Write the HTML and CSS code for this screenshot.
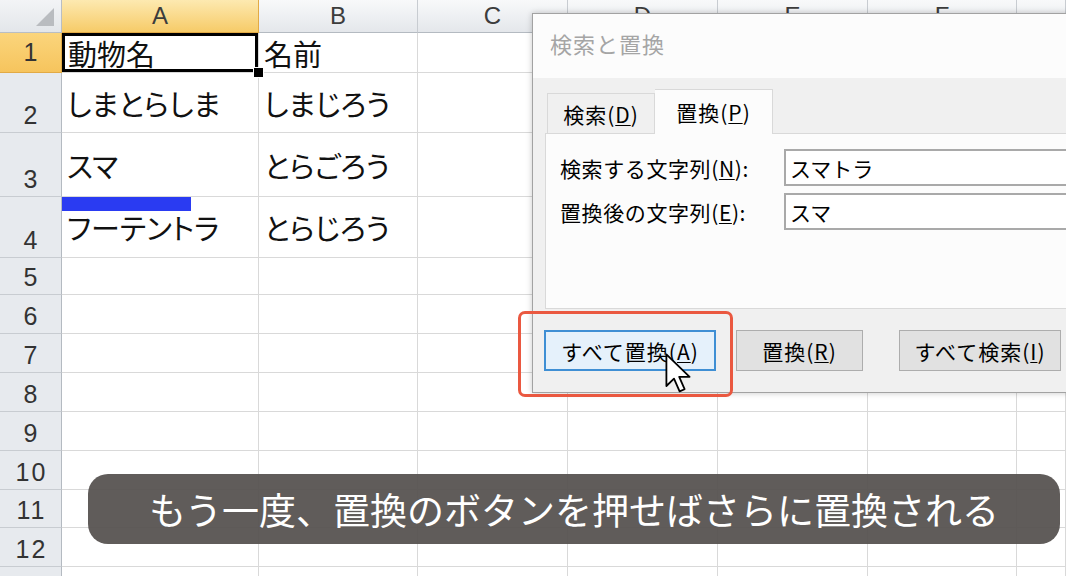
FILE: index.html
```html
<!DOCTYPE html>
<html lang="ja">
<head>
<meta charset="utf-8">
<title>検索と置換</title>
<link rel="stylesheet" href="styles.css">
</head>
<body>
<div class="screen">
  <div class="sheet">
    <div class="corner"><span class="tri"></span></div>
    <div class="ch sel">A</div><div class="ch">B</div><div class="ch">C</div><div class="ch">D</div><div class="ch">E</div><div class="ch">F</div><div class="ch"></div>

    <div class="rh sel r1">1</div>
    <div class="c active">動物名<span class="handle"></span></div><div class="c">名前</div><div class="c"></div><div class="c"></div><div class="c"></div><div class="c"></div><div class="c"></div>

    <div class="rh">2</div>
    <div class="c">しまとらしま</div><div class="c">しまじろう</div><div class="c"></div><div class="c"></div><div class="c"></div><div class="c"></div><div class="c"></div>

    <div class="rh">3</div>
    <div class="c">スマ</div><div class="c">とらごろう</div><div class="c"></div><div class="c"></div><div class="c"></div><div class="c"></div><div class="c"></div>

    <div class="rh">4</div>
    <div class="c"><span class="mark"></span>フーテントラ</div><div class="c">とらじろう</div><div class="c"></div><div class="c"></div><div class="c"></div><div class="c"></div><div class="c"></div>

    <div class="rh">5</div><div class="c"></div><div class="c"></div><div class="c"></div><div class="c"></div><div class="c"></div><div class="c"></div><div class="c"></div>
    <div class="rh">6</div><div class="c"></div><div class="c"></div><div class="c"></div><div class="c"></div><div class="c"></div><div class="c"></div><div class="c"></div>
    <div class="rh">7</div><div class="c"></div><div class="c"></div><div class="c"></div><div class="c"></div><div class="c"></div><div class="c"></div><div class="c"></div>
    <div class="rh">8</div><div class="c"></div><div class="c"></div><div class="c"></div><div class="c"></div><div class="c"></div><div class="c"></div><div class="c"></div>
    <div class="rh">9</div><div class="c"></div><div class="c"></div><div class="c"></div><div class="c"></div><div class="c"></div><div class="c"></div><div class="c"></div>
    <div class="rh">10</div><div class="c"></div><div class="c"></div><div class="c"></div><div class="c"></div><div class="c"></div><div class="c"></div><div class="c"></div>
    <div class="rh">11</div><div class="c"></div><div class="c"></div><div class="c"></div><div class="c"></div><div class="c"></div><div class="c"></div><div class="c"></div>
    <div class="rh">12</div><div class="c"></div><div class="c"></div><div class="c"></div><div class="c"></div><div class="c"></div><div class="c"></div><div class="c"></div>
    <div class="rh">13</div><div class="c"></div><div class="c"></div><div class="c"></div><div class="c"></div><div class="c"></div><div class="c"></div><div class="c"></div>
  </div>

  <div class="dialog">
    <div class="dlg-title">検索と置換</div>
    <div class="dlg-body">
      <div class="tabs">
        <div class="tab">検索(<u>D</u>)</div>
        <div class="tab active">置換(<u>P</u>)</div>
      </div>
      <div class="panel">
        <div class="field"><span class="label">検索する文字列(<u>N</u>):</span><span class="input">スマトラ</span></div>
        <div class="field"><span class="label">置換後の文字列(<u>E</u>):</span><span class="input">スマ</span></div>
      </div>
      <div class="buttons">
        <div class="btn primary">すべて置換(<u>A</u>)</div>
        <div class="btn b2">置換(<u>R</u>)</div>
        <div class="btn b3">すべて検索(<u>I</u>)</div>
      </div>
    </div>
  </div>

  <div class="highlight"></div>

  <svg class="cursor" viewBox="0 0 13 20" width="26" height="40">
    <path d="M0.7 0.7 L0.7 16.5 L4.5 12.8 L7.3 19.2 L9.8 18.1 L7.1 11.9 L12.3 11.9 Z" fill="#fff" stroke="#000" stroke-width="0.9" stroke-linejoin="round"/>
  </svg>

  <div class="caption">もう一度、置換のボタンを押せばさらに置換される</div>
</div>
</body>
</html>
```

FILE: styles.css
```css
* { box-sizing: border-box; margin: 0; padding: 0; }

body {
  margin: 0;
  background: #fff;
  font-family: "Noto Sans CJK JP", "Noto Sans", sans-serif;
  overflow: hidden;
}

.screen {
  position: relative;
  width: 1066px;
  height: 576px;
  overflow: hidden;
  background: #fff;
}

/* ---------- spreadsheet ---------- */
.sheet {
  display: grid;
  grid-template-columns: 62px 197px 159px 150px 150px 150px 149px 49px;
  grid-template-rows: 33px 40px 60px 64px 61px 37px 39px 39px 39px 39px 39px 38px 39px 39px;
}

.corner {
  background: linear-gradient(#f3f4f6, #e3e6ea);
  border-right: 1px solid #b9bec4;
  border-bottom: 1px solid #b9bec4;
  display: flex;
  align-items: flex-end;
  justify-content: flex-end;
  padding: 0 7px 6px 0;
}

.tri {
  width: 18px;
  height: 18px;
  background: #b9bcc0;
  clip-path: polygon(100% 0, 100% 100%, 0 100%);
}

.ch {
  background: linear-gradient(#f8f9fa, #e4e7eb);
  border-right: 1px solid #c8ccd1;
  border-bottom: 1px solid #b4bac1;
  display: flex;
  align-items: center;
  justify-content: center;
  font-family: "Liberation Sans", sans-serif;
  font-size: 24px;
  color: #3c3c3c;
}

.ch.sel {
  background: linear-gradient(#fde9b0, #f6cb68);
  border-right-color: #e2aa45;
  border-bottom-color: #e2aa45;
}

.rh {
  background: #e7eaee;
  border-right: 1px solid #b4bac1;
  border-bottom: 1px solid #c8ccd1;
  display: flex;
  align-items: flex-end;
  justify-content: center;
  padding: 0 0 4px 2px;
  font-family: "Liberation Sans", sans-serif;
  font-size: 25px;
  line-height: 1;
  letter-spacing: 2px;
  color: #333;
}

.rh.sel {
  background: linear-gradient(#fbd57c, #f6c45d);
  border-right-color: #e2aa45;
  border-bottom-color: #e2aa45;
}

.rh.r1 { padding-bottom: 7px; }

.c {
  position: relative;
  border-right: 1px solid #d9d9d9;
  border-bottom: 1px solid #d9d9d9;
  display: flex;
  align-items: center;
  padding-left: 5px;
  font-size: 29px;
  font-feature-settings: "palt";
  color: #111;
  white-space: nowrap;
}

.c.active {
  box-shadow: inset 0 0 0 3px #000;
  padding-left: 6px;
  z-index: 2;
}

.handle {
  position: absolute;
  right: -6px;
  bottom: -6px;
  width: 11px;
  height: 11px;
  background: #000;
  border: 1px solid #fff;
}

.mark {
  position: absolute;
  left: 0;
  top: 0;
  width: 129px;
  height: 14px;
  background: #2a3bf2;
}

/* ---------- dialog ---------- */
.dialog {
  position: absolute;
  left: 532px;
  top: 13px;
  width: 600px;
  height: 380px;
  border: 1px solid #a2a2a2;
  background: #f0f0f0;
  box-shadow: 0 0 6px rgba(0, 0, 0, 0.22);
  display: flex;
  flex-direction: column;
  color: #000;
}

.dlg-title {
  height: 64px;
  background: #fcfcfc;
  padding: 14px 0 0 17px;
  font-size: 22px;
  line-height: 30px;
  color: #a5a5a5;
  letter-spacing: 1px;
}

.dlg-body {
  flex: 1;
  padding: 11px 0 0 12px;
}

.tabs {
  display: flex;
  align-items: flex-end;
  height: 44px;
  padding-left: 2px;
}

.tab {
  width: 108px;
  height: 40px;
  border: 1px solid #d9d9d9;
  border-bottom: none;
  background: #f0f0f0;
  display: flex;
  align-items: center;
  justify-content: center;
  font-size: 21px;
  letter-spacing: 1px;
}

.tab.active {
  width: 118px;
  height: 45px;
  background: #fcfcfc;
  border-left: none;
  margin-bottom: -1px;
  position: relative;
  z-index: 1;
}

.panel {
  background: #fcfcfc;
  border: 1px solid #d9d9d9;
  height: 176px;
  padding: 15px 0 0 14px;
  display: flex;
  flex-direction: column;
  gap: 7px;
}

.field {
  display: flex;
  align-items: center;
  height: 37px;
}

.label {
  width: 224px;
  flex: none;
  font-size: 21px;
  letter-spacing: 0.6px;
  white-space: nowrap;
}

.input {
  flex: 1;
  height: 37px;
  border: 2px solid #a9a9a9;
  border-right: none;
  background: #fff;
  display: flex;
  align-items: center;
  padding-left: 4px;
  font-size: 21px;
}

u { text-decoration-thickness: 1px; text-underline-offset: 2px; }

.buttons {
  display: flex;
  margin: 21px 0 0 -1px;
}

.btn {
  height: 41px;
  border: 1px solid #adadad;
  background: #e1e1e1;
  display: flex;
  align-items: center;
  justify-content: center;
  font-size: 21px;
  letter-spacing: 1px;
  white-space: nowrap;
}

.btn.primary {
  width: 172px;
  background: #e5f1fb;
  border: 2px solid #3f8fd4;
}

.btn.b2 { width: 127px; margin-left: 20px; }
.btn.b3 { width: 162px; margin-left: 36px; }

/* ---------- overlays ---------- */
.highlight {
  position: absolute;
  left: 518px;
  top: 311px;
  width: 215px;
  height: 86px;
  border: 3px solid #ea5840;
  border-radius: 7px;
}

.cursor {
  position: absolute;
  left: 665px;
  top: 353px;
}

.caption {
  position: absolute;
  left: 88px;
  top: 474px;
  width: 972px;
  height: 70px;
  border-radius: 20px;
  background: rgba(84, 80, 77, 0.93);
  color: #fff;
  font-size: 37px;
  line-height: 70px;
  text-align: center;
  white-space: nowrap;
}
```
